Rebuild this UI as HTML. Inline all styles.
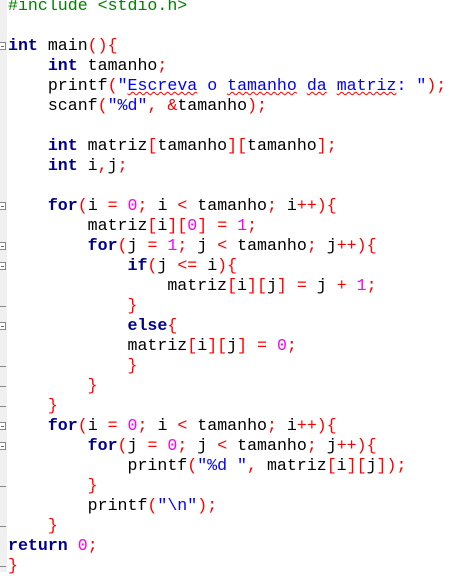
<!DOCTYPE html>
<html><head><style>
html,body{margin:0;padding:0;background:#fff;width:463px;height:572px;overflow:hidden}
.g{position:absolute;left:0;top:0;width:7px;height:572px;background:#f0f0f0}
pre{position:absolute;left:8px;top:-4px;margin:0;font-family:"Liberation Mono",monospace;font-size:16.6px;line-height:20px;color:#000}
.k{color:#00008b;font-weight:bold}
.o{color:#ff0000}
.n{color:#ff00ff}
.s{color:#0000ff}
.p{color:#008000}
.u{text-decoration:underline wavy #ff0000;text-decoration-thickness:1px}
.b{position:absolute;left:0;width:6px;height:8px;border:1px solid #888;border-left:none;box-sizing:border-box;background:#fff}
.b:after{content:"";position:absolute;left:1px;top:3px;width:3px;height:1px;background:#666}
.d{position:absolute;left:0;width:6px;height:1px;background:#888}
</style></head><body>
<div class="g"></div>
<div class="b" style="top:42px"></div>
<div class="b" style="top:202px"></div>
<div class="b" style="top:242px"></div>
<div class="b" style="top:262px"></div>
<div class="b" style="top:322px"></div>
<div class="b" style="top:422px"></div>
<div class="b" style="top:442px"></div>
<div class="d" style="top:306px"></div>
<div class="d" style="top:366px"></div>
<div class="d" style="top:386px"></div>
<div class="d" style="top:406px"></div>
<div class="d" style="top:486px"></div>
<div class="d" style="top:526px"></div>
<div class="d" style="top:566px"></div>
<pre><span class="p">#include &lt;stdio.h&gt;</span>

<span class="k">int</span> main<span class="o">(){</span>
    <span class="k">int</span> tamanho<span class="o">;</span>
    printf<span class="o">(</span><span class="s">"<span class="u">Escreva</span> o <span class="u">tamanho</span> <span class="u">da</span> <span class="u">matriz</span>: "</span><span class="o">);</span>
    scanf<span class="o">(</span><span class="s">"%d"</span><span class="o">,</span> <span class="o">&amp;</span>tamanho<span class="o">);</span>

    <span class="k">int</span> matriz<span class="o">[</span>tamanho<span class="o">][</span>tamanho<span class="o">];</span>
    <span class="k">int</span> i<span class="o">,</span>j<span class="o">;</span>

    <span class="k">for</span><span class="o">(</span>i <span class="o">=</span> <span class="n">0</span><span class="o">;</span> i <span class="o">&lt;</span> tamanho<span class="o">;</span> i<span class="o">++){</span>
        matriz<span class="o">[</span>i<span class="o">][</span><span class="n">0</span><span class="o">]</span> <span class="o">=</span> <span class="n">1</span><span class="o">;</span>
        <span class="k">for</span><span class="o">(</span>j <span class="o">=</span> <span class="n">1</span><span class="o">;</span> j <span class="o">&lt;</span> tamanho<span class="o">;</span> j<span class="o">++){</span>
            <span class="k">if</span><span class="o">(</span>j <span class="o">&lt;=</span> i<span class="o">){</span>
                matriz<span class="o">[</span>i<span class="o">][</span>j<span class="o">]</span> <span class="o">=</span> j <span class="o">+</span> <span class="n">1</span><span class="o">;</span>
            <span class="o">}</span>
            <span class="k">else</span><span class="o">{</span>
            matriz<span class="o">[</span>i<span class="o">][</span>j<span class="o">]</span> <span class="o">=</span> <span class="n">0</span><span class="o">;</span>
            <span class="o">}</span>
        <span class="o">}</span>
    <span class="o">}</span>
    <span class="k">for</span><span class="o">(</span>i <span class="o">=</span> <span class="n">0</span><span class="o">;</span> i <span class="o">&lt;</span> tamanho<span class="o">;</span> i<span class="o">++){</span>
        <span class="k">for</span><span class="o">(</span>j <span class="o">=</span> <span class="n">0</span><span class="o">;</span> j <span class="o">&lt;</span> tamanho<span class="o">;</span> j<span class="o">++){</span>
            printf<span class="o">(</span><span class="s">"%d "</span><span class="o">,</span> matriz<span class="o">[</span>i<span class="o">][</span>j<span class="o">]);</span>
        <span class="o">}</span>
        printf<span class="o">(</span><span class="s">"\n"</span><span class="o">);</span>
    <span class="o">}</span>
<span class="k">return</span> <span class="n">0</span><span class="o">;</span>
<span class="o">}</span></pre>
</body></html>
